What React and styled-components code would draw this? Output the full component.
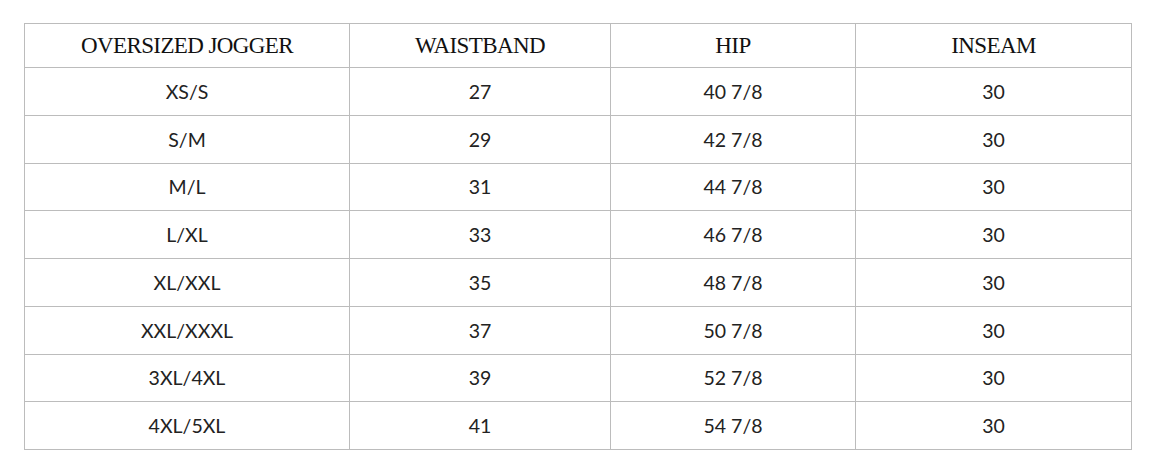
import React from "react";
import styled, { createGlobalStyle } from "styled-components";

const Global = createGlobalStyle`
  html, body { margin: 0; padding: 0; background: #ffffff; }
`;

const Page = styled.div`
  padding: 23px 0 0 24px;
`;

const Table = styled.table`
  border-collapse: collapse;
  width: 1107px;
  table-layout: fixed;
  border: 1px solid #bcbcbc;
`;

const HeadCell = styled.th`
  height: 43px;
  padding: 0;
  border: 1px solid #bcbcbc;
  font-family: "Liberation Serif", "Times New Roman", serif;
  font-weight: 400;
  font-size: 23px;
  color: #111;
  text-align: center;
  vertical-align: middle;
  letter-spacing: -0.6px;
`;

const Cell = styled.td`
  height: 46.75px;
  padding: 0;
  border: 1px solid #bcbcbc;
  font-family: Lato, "Open Sans", sans-serif;
  font-size: 19.5px;
  color: #222;
  text-align: center;
  vertical-align: middle;
`;

const cols = [325, 261, 245, 276];
const headers = ["OVERSIZED JOGGER", "WAISTBAND", "HIP", "INSEAM"];
const rows = [
  ["XS/S", "27", "40 7/8", "30"],
  ["S/M", "29", "42 7/8", "30"],
  ["M/L", "31", "44 7/8", "30"],
  ["L/XL", "33", "46 7/8", "30"],
  ["XL/XXL", "35", "48 7/8", "30"],
  ["XXL/XXXL", "37", "50 7/8", "30"],
  ["3XL/4XL", "39", "52 7/8", "30"],
  ["4XL/5XL", "41", "54 7/8", "30"],
];

export default function App() {
  return (
    <>
      <Global />
      <Page>
        <Table>
          <colgroup>
            {cols.map((w, i) => (
              <col key={i} style={{ width: w }} />
            ))}
          </colgroup>
          <thead>
            <tr>
              {headers.map((h) => (
                <HeadCell key={h}>{h}</HeadCell>
              ))}
            </tr>
          </thead>
          <tbody>
            {rows.map((r) => (
              <tr key={r[0]}>
                {r.map((c, i) => (
                  <Cell key={i}>{c}</Cell>
                ))}
              </tr>
            ))}
          </tbody>
        </Table>
      </Page>
    </>
  );
}
